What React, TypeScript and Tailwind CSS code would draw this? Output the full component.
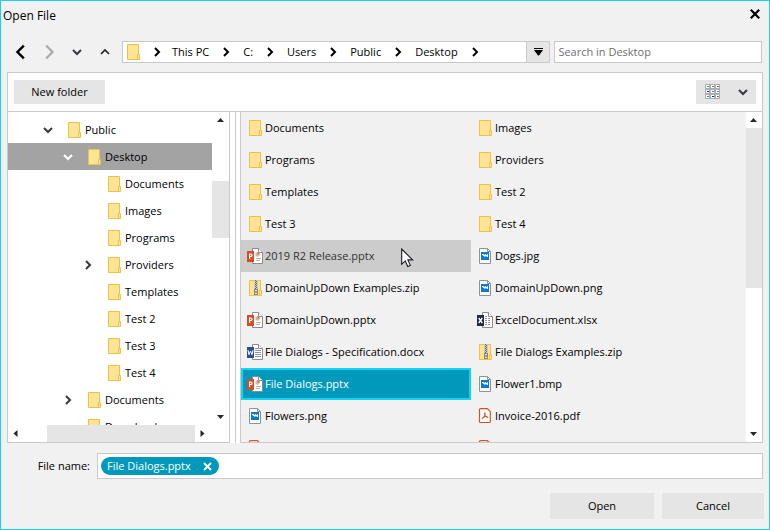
import React from "react";

type Kind = "folder" | "ppt" | "word" | "excel" | "zip" | "image" | "pdf";

function FolderShape() {
  return (
    <>
      <path d="M2.500 .5h11v15h-11z" fill="#ffe593" stroke="#e9c34b" />
      <path d="M12.500 10.500h2v5h-2z" fill="#ffe593" stroke="#e9c34b" />
    </>
  );
}

function OfficeIcon({ color, children }: { color: string; children: React.ReactNode }) {
  return (
    <>
      <path d="M5.500 .5h6l4 4v11h-10z" fill="#fff" stroke="#8f8a8f" />
      <path d="M11.500 .5v4h4" fill="#fff" stroke="#8f8a8f" />
      <path d="M7 2h1v13H7z" fill="#fff" />
      <rect x="0" y="3" width="7" height="11" fill={color} />
      {children}
    </>
  );
}

function FileIcon({ kind }: { kind: Kind }) {
  return (
    <svg width="16" height="16" viewBox="0 0 16 16" fill="none" className="shrink-0" aria-hidden="true">
      {kind === "folder" && <FolderShape />}
      {kind === "zip" && (
        <>
          <FolderShape />
          <rect x="7" y="0" width="4" height="10" fill="#cfcac0" />
          <path d="M8.500 0v10M9.500 1v9" stroke="#6b6560" strokeDasharray="1 1" />
          <rect x="7.500" y="9.500" width="3" height="5" fill="#e9e7e3" stroke="#8a847c" />
          <path d="M9 11v2" stroke="#55504b" />
        </>
      )}
      {kind === "ppt" && (
        <OfficeIcon color="#d24e26">
          <path d="M2.600 11V6h1.200a1.200 1.200 0 0 1 0 2.500H2.600" stroke="#fff" strokeWidth="1.200" />
          <path d="M9 10.500h5M9 12.500h4" stroke="#b9b2ae" />
          <circle cx="10.500" cy="6.500" r="2.200" fill="#d9b8a6" />
          <path d="M10.500 6.500V4.300a2.200 2.200 0 0 1 2.200 2.200z" fill="#c9714f" />
        </OfficeIcon>
      )}
      {kind === "word" && (
        <OfficeIcon color="#2b4f93">
          <path d="M1 6.200l1 4.500L3.500 7 5 10.700l1-4.500" stroke="#fff" />
          <path d="M8 4.500h3M8 6.500h6M8 8.500h6M8 10.500h6M8 12.500h6" stroke="#96949a" />
        </OfficeIcon>
      )}
      {kind === "excel" && (
        <OfficeIcon color="#1f2a44">
          <path d="M1.700 6l3.600 5M5.300 6l-3.600 5" stroke="#fff" strokeWidth="1.300" />
          <path d="M8 4.500h2M8 6.500h6M8 8.500h6M8 10.500h6M8 12.500h6" stroke="#96949a" strokeDasharray="2 1" />
        </OfficeIcon>
      )}
      {kind === "image" && (
        <>
          <path d="M2.500 .5h8l3 3v12h-11z" fill="#fff" stroke="#8d939b" />
          <path d="M10.500 .5v3h3" stroke="#8d939b" />
          <rect x="4" y="4" width="8" height="8" fill="#0b78d0" />
          <path d="M5 6h1.500l1 1 1-1 1 1L11 6v3H10L9 7.800 8 9 6.500 7.800 5 7z" fill="#fff" />
        </>
      )}
      {kind === "pdf" && (
        <>
          <path
            d="M3.500 .7h6.800l3 3v9.800a1 1 0 0 1-1 1H3.500a1 1 0 0 1-1-1V1.700a1 1 0 0 1 1-1z"
            fill="#fff"
            stroke="#cf5526"
            strokeWidth="1.200"
          />
          <path
            d="M7.700 4.600c-.8.200-.2 1.900.3 2.700.6 1.200 1.500 2.200 2.700 2.200 1-.3-.6-1.300-2.700-1-1.700.200-3 1.100-2.900 1.900.6.800 2-.8 2.700-2.700.4-1.300.5-2.800-.1-3.100z"
            stroke="#cf5526"
            strokeWidth="1"
          />
        </>
      )}
    </svg>
  );
}

const chevronPaths = {
  left: "M9 2.500 4.500 7 9 11.500",
  right: "M5 3 9 7 5 11",
  down: "M3 5 7 9l4-4",
  up: "M3 9l4-4 4 4",
};

function Chevron({ dir, size = 14, width = 2 }: { dir: keyof typeof chevronPaths; size?: number; width?: number }) {
  return (
    <svg width={size} height={size} viewBox="0 0 14 14" fill="none" stroke="currentColor" strokeWidth={width} aria-hidden="true">
      <path d={chevronPaths[dir]} />
    </svg>
  );
}

const arrowPaths = {
  up: "M0 6 3.500 2 7 6z",
  down: "M0 2h7L3.500 6z",
  left: "M5.500 0v7L1.500 3.500z",
  right: "M1.500 0v7l4-3.500z",
};

function ScrollArrow({ dir, label }: { dir: keyof typeof arrowPaths; label: string }) {
  return (
    <button type="button" aria-label={label} className="flex size-4 shrink-0 items-center justify-center bg-white pr-px pb-px text-[#26262e]">
      <svg width="7" height="7" viewBox="0 0 7 7" fill="currentColor" aria-hidden="true">
        <path d={arrowPaths[dir]} />
      </svg>
    </button>
  );
}

type Node = { name: string; level: number; state?: "open" | "closed"; selected?: boolean };

const tree: Node[] = [
  { name: "Public", level: 0, state: "open" },
  { name: "Desktop", level: 1, state: "open", selected: true },
  { name: "Documents", level: 2 },
  { name: "Images", level: 2 },
  { name: "Programs", level: 2 },
  { name: "Providers", level: 2, state: "closed" },
  { name: "Templates", level: 2 },
  { name: "Test 2", level: 2 },
  { name: "Test 3", level: 2 },
  { name: "Test 4", level: 2 },
  { name: "Documents", level: 1, state: "closed" },
  { name: "Downloads", level: 1 },
];

const indents = ["pl-8", "pl-[52px]", "pl-[72px]"];

type Entry = { name: string; kind: Kind; state?: "hover" | "selected" };

const files: Entry[] = [
  { name: "Documents", kind: "folder" },
  { name: "Images", kind: "folder" },
  { name: "Programs", kind: "folder" },
  { name: "Providers", kind: "folder" },
  { name: "Templates", kind: "folder" },
  { name: "Test 2", kind: "folder" },
  { name: "Test 3", kind: "folder" },
  { name: "Test 4", kind: "folder" },
  { name: "2019 R2 Release.pptx", kind: "ppt", state: "hover" },
  { name: "Dogs.jpg", kind: "image" },
  { name: "DomainUpDown Examples.zip", kind: "zip" },
  { name: "DomainUpDown.png", kind: "image" },
  { name: "DomainUpDown.pptx", kind: "ppt" },
  { name: "ExcelDocument.xlsx", kind: "excel" },
  { name: "File Dialogs - Specification.docx", kind: "word" },
  { name: "File Dialogs Examples.zip", kind: "zip" },
  { name: "File Dialogs.pptx", kind: "ppt", state: "selected" },
  { name: "Flower1.bmp", kind: "image" },
  { name: "Flowers.png", kind: "image" },
  { name: "Invoice-2016.pdf", kind: "pdf" },
  { name: "", kind: "pdf" },
  { name: "", kind: "pdf" },
];

const path = ["This PC", "C:", "Users", "Public", "Desktop"];

function Pointer() {
  return (
    <svg className="absolute top-2 left-40" width="13" height="20" viewBox="0 0 13 20" aria-hidden="true">
      <path d="M.7 1v15.300l3.600-3.400 2.400 5.600 2.600-1.100-2.400-5.500h4.700z" fill="#fff" stroke="#1c1c24" strokeWidth="1.100" />
    </svg>
  );
}

export default function App() {
  return (
    <div className="flex h-screen flex-col border border-[#18d0f8] bg-[#f1f1f1] font-['Open_Sans','Noto_Sans',sans-serif] text-[11px] leading-4 text-black">
      <header className="flex h-10 shrink-0 items-start justify-between pt-1 pr-2 pl-0.5">
        <h1 className="text-[12px] leading-[22px]">Open File</h1>
        <button type="button" aria-label="Close" className="flex h-[18px] w-3 items-center justify-center text-black">
          <svg width="10" height="10" viewBox="0 0 10 10" stroke="currentColor" strokeWidth="2.200" aria-hidden="true">
            <path d="M.8.8l8.400 8.400M9.200.8.8 9.200" />
          </svg>
        </button>
      </header>

      <main className="flex min-h-0 flex-1 flex-col px-1.5">
        <nav className="flex h-[22px] shrink-0 pr-px" aria-label="Location">
          <button type="button" aria-label="Back" className="flex w-7 items-center justify-center text-black">
            <Chevron dir="left" size={20} width={1.7} />
          </button>
          <button type="button" aria-label="Forward" className="flex w-7 items-center justify-center text-[#a9a9a9]">
            <svg width="20" height="20" viewBox="0 0 14 14" fill="none" stroke="currentColor" strokeWidth="1.500" aria-hidden="true">
              <path d="M5 2.500 9.500 7 5 11.500" />
            </svg>
          </button>
          <button type="button" aria-label="Recent locations" className="flex w-7 items-center justify-center text-[#3a3740]">
            <Chevron dir="down" />
          </button>
          <button type="button" aria-label="Up" className="flex w-7 items-center justify-center text-[#222]">
            <Chevron dir="up" width={1.7} />
          </button>
          <div className="ml-[3px] flex min-w-0 flex-1 border border-[#c9c9c9] bg-white">
            <ol className="flex flex-1 items-center pl-0.5">
              <li className="flex items-center">
                <FileIcon kind="folder" />
                <span className="flex w-[31px] justify-center text-black">
                  <Chevron dir="right" />
                </span>
              </li>
              {path.map((part) => (
                <li key={part} className="flex items-center">
                  <button type="button">{part}</button>
                  <span className="flex w-[34px] justify-center text-black">
                    <Chevron dir="right" />
                  </span>
                </li>
              ))}
            </ol>
            <button type="button" aria-label="Previous locations" className="flex w-[23px] items-center justify-center border-l border-[#c9c9c9] bg-[#e5e5e5] pb-px text-black">
              <svg width="9" height="8" viewBox="0 0 9 8" fill="currentColor" aria-hidden="true">
                <path d="M0 0h9v1H0zM0 2h9L5 7.500H4z" />
              </svg>
            </button>
          </div>
          <input
            type="search"
            aria-label="Search in Desktop"
            placeholder="Search in Desktop"
            className="ml-1 w-[27.5%] border border-[#c9c9c9] bg-white px-[3px] placeholder:text-[#6f6f6f]"
          />
        </nav>

        <div className="mt-[9px] flex h-10 shrink-0 items-center justify-between border border-[#c9c9c9] bg-white px-1.5">
          <button type="button" className="h-6 w-[91px] bg-[#e5e5e5]">
            New folder
          </button>
          <button type="button" aria-label="Change view" className="flex h-6 w-[60px] items-center bg-[#e5e5e5] pl-[9px] text-[#3a3740]">
            <svg width="16" height="16" viewBox="0 0 16 16" fill="none" shapeRendering="crispEdges" aria-hidden="true">
              <path
                d="M.5.5h4v4h-4zM5.500.5h4v4h-4zM10.500.5h4v4h-4zM.5 5.500h4v4h-4zM5.500 5.500h4v4h-4zM10.500 5.500h4v4h-4zM.5 10.500h4v4h-4zM5.500 10.500h4v4h-4zM10.500 10.500h4v4h-4z"
                fill="#fff"
                stroke="#a9afb5"
              />
              <path d="M2 2h2v1H2zM7 7h2v1H7zM12 7h2v1h-2zM2 12h2v1H2z" fill="#2a8fc9" />
              <path d="M7 2h2v1H7zM12 2h2v1h-2zM12 12h2v1h-2z" fill="#b5622d" />
              <path d="M2 7h2v1H2zM7 12h2v1H7z" fill="#2b3550" />
            </svg>
            <span className="ml-[15px]">
              <Chevron dir="down" />
            </span>
          </button>
        </div>

        <div className="flex min-h-0 flex-1">
          <section aria-label="Folders" className="flex w-[223px] shrink-0 flex-col border border-t-0 border-[#c9c9c9] bg-white">
            <div className="flex min-h-0 flex-1">
              <ul className="flex-1 overflow-hidden pt-1">
                {tree.map((node, i) => (
                  <li
                    key={i}
                    className={`flex h-[27px] items-center ${indents[node.level]} ${node.selected ? "bg-[#a3a3a3]" : ""}`}
                  >
                    <span className="mr-2.5 flex size-4 items-center justify-center">
                      {node.state && (
                        <button
                          type="button"
                          aria-label={`Toggle ${node.name}`}
                          className={node.selected ? "text-white" : "text-[#3a3740]"}
                        >
                          <Chevron dir={node.state === "open" ? "down" : "right"} />
                        </button>
                      )}
                    </span>
                    <FileIcon kind="folder" />
                    <span className="ml-[3px]">{node.name}</span>
                  </li>
                ))}
              </ul>
              <div className="flex w-[17px] flex-col items-center">
                <ScrollArrow dir="up" label="Scroll folders up" />
                <div className="mt-[53px] h-[57px] w-full bg-[#e5e5e5]" />
                <div className="flex-1" />
                <ScrollArrow dir="down" label="Scroll folders down" />
              </div>
            </div>
            <div className="flex h-[17px] shrink-0 items-center pr-[18px]">
              <ScrollArrow dir="left" label="Scroll folders left" />
              <div className="ml-[23px] h-full w-[148px] bg-[#e5e5e5]" />
              <div className="flex-1" />
              <ScrollArrow dir="right" label="Scroll folders right" />
            </div>
          </section>

          <div className="flex w-2.5 shrink-0 justify-center bg-white">
            <div className="w-px bg-[#c9c9c9]" />
          </div>

          <section aria-label="Files" className="flex min-w-0 flex-1 border border-t-0 border-[#c9c9c9]">
            <ul className="grid flex-1 auto-rows-[32px] grid-cols-[230px_1fr] overflow-hidden">
              {files.map((file, i) => (
                <li
                  key={i}
                  className={`relative flex items-center gap-0.5 ${
                    file.state === "selected"
                      ? "border-2 border-[#18d0f8] bg-[#0099bc] pl-1 text-white"
                      : file.state === "hover"
                        ? "bg-[#cccccc] pl-1.5 text-[#333]"
                        : "pl-1.5"
                  }`}
                >
                  <FileIcon kind={file.kind} />
                  <span>{file.name}</span>
                  {file.state === "hover" && <Pointer />}
                </li>
              ))}
            </ul>
            <div className="flex w-4 flex-col bg-white">
              <ScrollArrow dir="up" label="Scroll files up" />
              <div className="h-40 bg-[#e5e5e5]" />
              <div className="flex-1" />
              <ScrollArrow dir="down" label="Scroll files down" />
            </div>
          </section>
        </div>

        <div className="mt-2.5 flex h-[26px] shrink-0 items-center">
          <label htmlFor="file-name" className="w-[90px] pr-[7px] text-right">
            File name:
          </label>
          <div className="flex h-full flex-1 items-center border border-[#c9c9c9] bg-white pl-[3px]">
            <span className="flex h-[18px] items-center rounded-full bg-[#0099bc] pr-[7px] pl-1.5 text-white">
              File Dialogs.pptx
              <button type="button" aria-label="Remove File Dialogs.pptx" className="ml-3">
                <svg width="9" height="9" viewBox="0 0 9 9" stroke="currentColor" strokeWidth="1.800" aria-hidden="true">
                  <path d="M1 1l7 7M8 1 1 8" />
                </svg>
              </button>
            </span>
            <input id="file-name" type="text" className="h-full min-w-0 flex-1 px-1 outline-none" />
          </div>
        </div>
      </main>

      <footer className="flex shrink-0 justify-end gap-2 pt-3.5 pr-[5px] pb-2.5">
        <button type="button" className="h-[26px] w-[104px] bg-[#e5e5e5]">
          Open
        </button>
        <button type="button" className="h-[26px] w-[102px] bg-[#e5e5e5]">
          Cancel
        </button>
      </footer>
    </div>
  );
}
